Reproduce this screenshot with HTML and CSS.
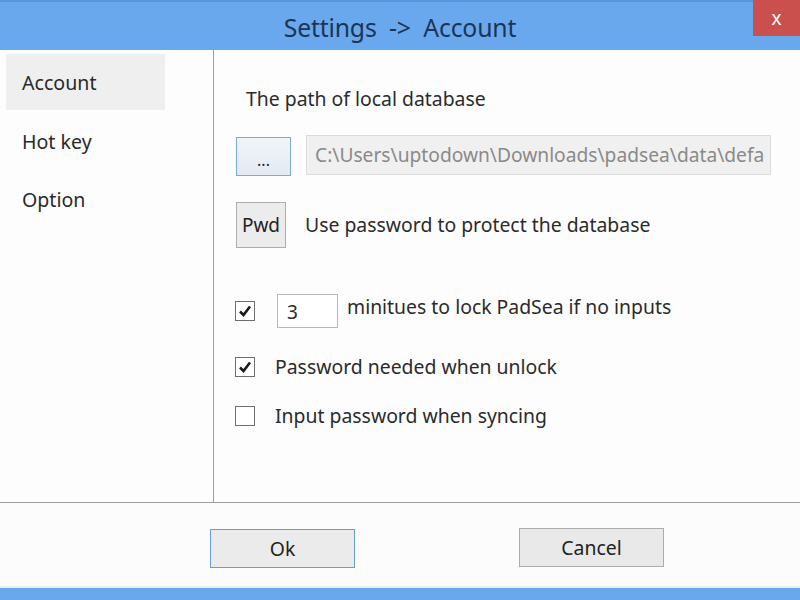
FILE: index.html
```html
<!DOCTYPE html>
<html>
<head>
<meta charset="utf-8">
<link rel="stylesheet" href="styles.css">
</head>
<body>
<div class="window">
  <div class="titlebar">
    <div class="title">Settings&nbsp; -&gt;&nbsp; Account</div>
    <div class="close">x</div>
  </div>
  <div class="main">
    <div class="nav">
      <div class="nav-item selected">Account</div>
      <div class="nav-item">Hot key</div>
      <div class="nav-item">Option</div>
    </div>
    <div class="content">
      <div class="label-path">The path of local database</div>
      <div class="row row-path">
        <div class="btn btn-browse">...</div>
        <div class="path-input">C:\Users\uptodown\Downloads\padsea\data\defa</div>
      </div>
      <div class="row row-pwd">
        <div class="btn btn-pwd">Pwd</div>
        <div class="text">Use password to protect the database</div>
      </div>
      <div class="row row-lock">
        <div class="check checked"><svg viewBox="0 0 20 20" width="20" height="20"><path d="M5 10.5 L8.5 14 L15 5.5" fill="none" stroke="#1a1a1a" stroke-width="2.6"/></svg></div>
        <div class="num-input">3</div>
        <div class="text lock-text">minitues to lock PadSea if no inputs</div>
      </div>
      <div class="row row-check">
        <div class="check checked"><svg viewBox="0 0 20 20" width="20" height="20"><path d="M5 10.5 L8.5 14 L15 5.5" fill="none" stroke="#1a1a1a" stroke-width="2.6"/></svg></div>
        <div class="text">Password needed when unlock</div>
      </div>
      <div class="row row-check">
        <div class="check"></div>
        <div class="text">Input password when syncing</div>
      </div>
    </div>
  </div>
  <div class="footer">
    <div class="btn btn-foot btn-ok">Ok</div>
    <div class="btn btn-foot btn-cancel">Cancel</div>
  </div>
  <div class="bottom-strip"></div>
</div>
</body>
</html>
```
FILE: styles.css
```css
html, body {
  margin: 0;
  padding: 0;
}
body {
  font-family: "Noto Sans", "Open Sans", sans-serif;
  color: #2b2b2b;
}
.window {
  width: 800px;
  height: 600px;
  display: flex;
  flex-direction: column;
  background: #fdfdfd;
  overflow: hidden;
}
.titlebar {
  position: relative;
  height: 48px;
  background: #6aa8ee;
  border-top: 2px solid #5a94d8;
  display: flex;
  align-items: center;
  justify-content: center;
}
.title {
  font-size: 24.8px;
  color: #1c3555;
  padding-top: 2px;
  letter-spacing: -0.2px;
}
.close {
  position: absolute;
  top: -2px;
  right: 0;
  width: 47px;
  height: 36px;
  background: #c9504d;
  color: #fff;
  font-size: 19px;
  display: flex;
  align-items: center;
  justify-content: center;
  box-sizing: border-box;
}
.main {
  display: flex;
  height: 453px;
  border-bottom: 1px solid #9e9e9e;
  box-sizing: border-box;
}
.nav {
  width: 214px;
  border-right: 1px solid #9e9e9e;
  padding-top: 4px;
  box-sizing: border-box;
}
.nav-item {
  width: 159px;
  height: 58px;
  margin-left: 6px;
  padding-left: 16px;
  box-sizing: border-box;
  display: flex;
  align-items: center;
  font-size: 19.6px;
  color: #2a2a2a;
}
.nav-item.selected {
  background: #efefef;
  height: 56px;
  margin-bottom: 2px;
}
.content {
  flex: 1;
  padding-left: 22px;
  padding-top: 36px;
}
.label-path {
  font-size: 19.4px;
  margin-left: 10px;
  height: 26px;
  line-height: 26px;
}
.row {
  display: flex;
  align-items: center;
}
.text {
  font-size: 19.4px;
  line-height: 26px;
  color: #2b2b2b;
}
.btn {
  box-sizing: border-box;
  display: flex;
  align-items: center;
  justify-content: center;
  font-size: 19px;
  color: #222;
}
.row-path {
  margin-top: 22px;
}
.btn-browse {
  width: 55px;
  height: 39px;
  border: 1px solid #7ea9d9;
  background: linear-gradient(#f1f5fa, #e3eaf2);
  margin-top: 3px;
  padding-top: 6px;
  font-size: 16px;
}
.path-input {
  margin-left: 15px;
  width: 465px;
  height: 40px;
  box-sizing: border-box;
  border: 1px solid #dcdcdc;
  background: #f0f0f0;
  color: #8a8a8a;
  font-size: 19.2px;
  padding-left: 8px;
  line-height: 38px;
  white-space: nowrap;
  overflow: hidden;
}
.row-pwd {
  margin-top: 26px;
}
.btn-pwd {
  width: 50px;
  height: 46px;
  border: 1px solid #adadad;
  background: #ececec;
  font-size: 19px;
}
.row-pwd .text {
  margin-left: 19px;
}
.row-lock {
  margin-top: 46px;
  height: 34px;
}
.check {
  width: 20px;
  height: 20px;
  box-sizing: border-box;
  border: 1px solid #6e6e6e;
  background: #fff;
  margin-left: -1px;
  position: relative;
}
.check svg {
  position: absolute;
  left: -1px;
  top: -1px;
}
.num-input {
  margin-left: 22px;
  width: 61px;
  height: 34px;
  box-sizing: border-box;
  border: 1px solid #b8b8b8;
  background: #fff;
  font-size: 19px;
  padding-left: 9px;
  line-height: 34px;
  color: #2b2b2b;
}
.lock-text {
  margin-left: 9px;
  align-self: flex-start;
  margin-top: 0;
}
.row-check {
  margin-top: 26px;
}
.row-check + .row-check {
  margin-top: 23px;
}
.row-check .text {
  margin-left: 20px;
}
.footer {
  flex: 1;
  display: flex;
  align-items: flex-start;
  padding-top: 26px;
  background: #fcfcfc;
}
.btn-foot {
  width: 145px;
  height: 39px;
  font-size: 19.4px;
}
.btn-ok {
  margin-left: 210px;
  border: 1px solid #6c9bd2;
  background: #ebebeb;
}
.btn-cancel {
  margin-left: 164px;
  border: 1px solid #acacac;
  background: #e9e9e9;
  margin-top: -1px;
}
.bottom-strip {
  height: 12px;
  background: #6aa8ee;
  border-top: 2px solid #e8f0fa;
}
```
